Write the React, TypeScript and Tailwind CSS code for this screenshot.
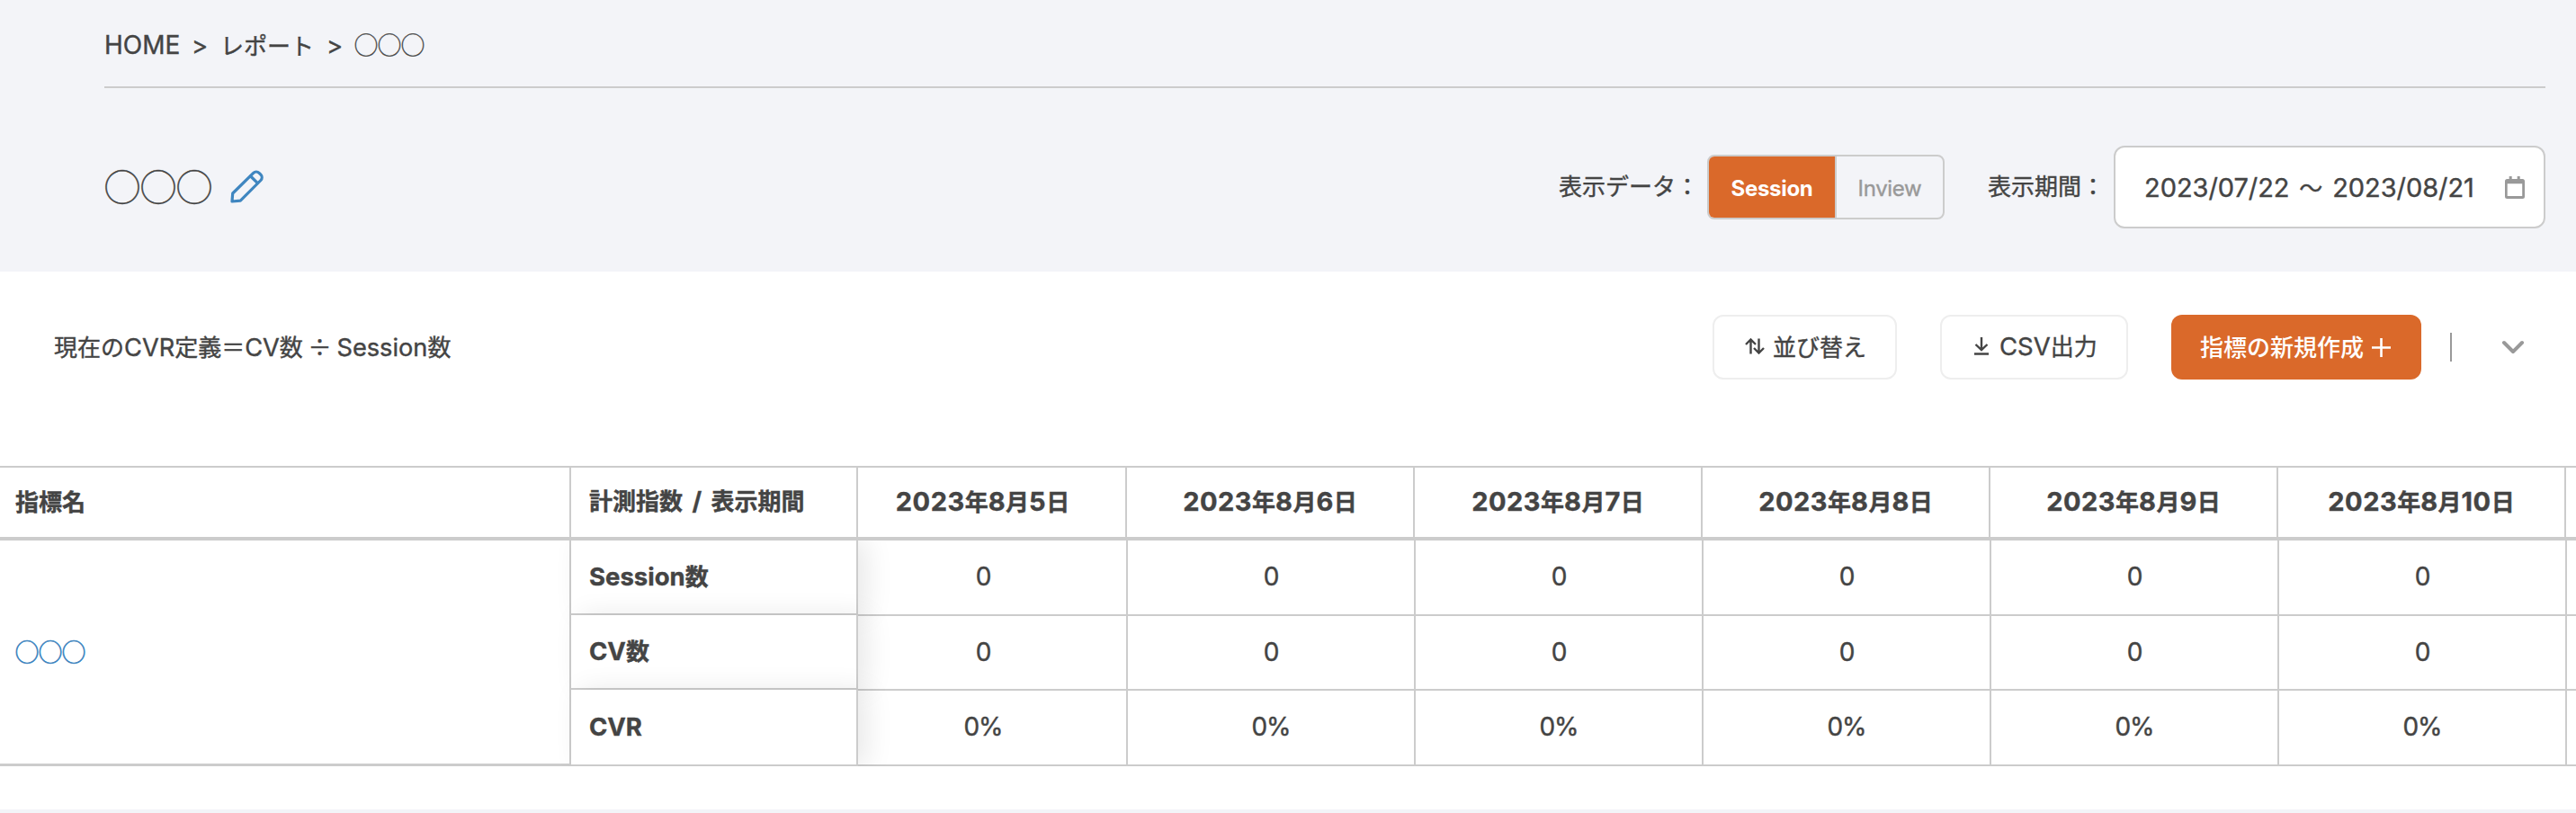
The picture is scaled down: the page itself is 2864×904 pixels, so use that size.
import { Fragment } from 'react'
import type { ReactNode } from 'react'

const DATES = ['2023年8月5日', '2023年8月6日', '2023年8月7日', '2023年8月8日', '2023年8月9日', '2023年8月10日']

const ROWS = [
  { label: 'Session数', value: '0', height: 'h-[84px]', headHeight: 'h-[83px]' },
  { label: 'CV数', value: '0', height: 'h-[83px]', headHeight: 'h-[83px]' },
  { label: 'CVR', value: '0%', height: 'h-[84px]', headHeight: 'h-[85px]' },
]

// 英数字だけ Inter で少し大きめに組む
function Mixed({ text, latin = 'text-[27.5px]' }: { text: string; latin?: string }) {
  const parts = text.split(/([\x21-\x7e]+)/)
  return (
    <span className="whitespace-pre">
      {parts.map((part, i) =>
        i % 2 === 1 ? (
          <span key={i} className={`font-[Inter,sans-serif] leading-none ${latin}`}>
            {part}
          </span>
        ) : (
          <Fragment key={i}>{part}</Fragment>
        )
      )}
    </span>
  )
}

function PencilIcon() {
  return (
    <svg className="h-[37px] w-[37px]" viewBox="0 0 37 37" fill="none" stroke="currentColor" strokeWidth={3.2} strokeLinejoin="round" strokeLinecap="round">
      <path d="M2.700 26L25.700 3.300a4.600 4.600 0 0 1 6.400 0l1.800 1.800a4.600 4.600 0 0 1 0 6.400L11.300 34.200l-9.300.8z" />
      <path d="M22.700 7l7.200 7.200" />
    </svg>
  )
}

function CalendarIcon() {
  return (
    <svg className="h-[25px] w-[22px]" viewBox="0 0 22 25" fill="currentColor">
      <path
        fillRule="evenodd"
        d="M4.700 0h3v3h6V0h3v3H19.500A2.500 2.500 0 0 1 22 5.500v17A2.500 2.500 0 0 1 19.500 25h-17A2.500 2.500 0 0 1 0 22.500v-17A2.500 2.500 0 0 1 2.500 3h2.200zM2.700 8.300V22h16.500V8.300z"
      />
    </svg>
  )
}

function SortIcon() {
  return (
    <svg className="h-[18px] w-[22px]" viewBox="0 0 22 18" fill="none" stroke="currentColor" strokeWidth={2.4}>
      <path d="M6.500 17.500V1.500M1 7l5.500-5.500L12 7" />
      <path d="M15.500 .5v16M10 11l5.500 5.500L21 11" />
    </svg>
  )
}

function DownloadIcon() {
  return (
    <svg className="h-[20px] w-[16px]" viewBox="0 0 16 20" fill="none" stroke="currentColor" strokeWidth={2.4}>
      <path d="M8 0v14M1.500 8L8 14.200 14.500 8M0 18.500h16" />
    </svg>
  )
}

function OutlineButton({ className, children }: { className: string; children: ReactNode }) {
  return (
    <button type="button" className={`flex h-[72px] items-center rounded-xl border-2 border-[#eeeeee] bg-white pb-0.5 ${className}`}>
      {children}
    </button>
  )
}

function Header() {
  return (
    <header className="h-[302px] bg-[#f3f4f8] pr-[34px] pl-[116px]">
      <nav className="flex h-[98px] items-center border-b-2 border-[#cccccc] pt-[3px]">
        <a className="w-[97px] pt-px">
          <Mixed text="HOME" latin="text-[28px]" />
        </a>
        <span className="w-[32px] pt-0.5">
          <Mixed text=">" />
        </span>
        <a className="w-[118px]">レポート</a>
        <span className="w-[31px] pt-0.5">
          <Mixed text=">" />
        </span>
        <span className="pb-0.5">◯◯◯</span>
      </nav>

      <div className="flex h-[220px] items-center">
        <h1 className="pb-[5px] text-[40px] leading-none">◯◯◯</h1>
        <button type="button" className="ml-5 pb-px text-[#3f86c0]" aria-label="編集">
          <PencilIcon />
        </button>

        <div className="ml-auto flex items-center">
          <span className="mr-[9px] pb-1">表示データ：</span>
          <div className="flex h-[72px] w-[264px] overflow-hidden rounded-lg border-2 border-[#cccccc] text-[24px]">
            <button type="button" className="flex w-[142px] items-center justify-center border-r-2 border-[#cccccc] bg-[#da692a] pt-[3px] font-[Inter,sans-serif] font-bold tracking-[-0.3px] text-white [-webkit-text-stroke:0px]">
              Session
            </button>
            <button type="button" className="flex flex-1 items-center justify-center pt-[3px] font-[Inter,sans-serif] tracking-[-0.3px] text-[#999999]">
              Inview
            </button>
          </div>
          <span className="mr-[10px] ml-[48px] pb-1">表示期間：</span>
          <div className="flex h-[92px] w-[480px] items-center justify-between rounded-xl border-2 border-[#cccccc] bg-white pr-[21px] pl-8 [word-spacing:5px]">
            <Mixed text="2023/07/22 〜 2023/08/21" latin="text-[29px] tracking-[-0.05px]" />
            <span className="text-[#999999]">
              <CalendarIcon />
            </span>
          </div>
        </div>
      </div>
    </header>
  )
}

function Toolbar() {
  return (
    <div className="flex h-[216px] items-center pr-[56px] pb-[48px] pl-[60px]">
      <p>
        <Mixed text="現在のCVR定義＝CV数 ÷ Session数" latin="text-[27.2px]" />
      </p>
      <div className="ml-auto flex items-center">
        <OutlineButton className="mr-12 w-[205px] gap-[9px] pl-[34px]">
          <SortIcon />
          並び替え
        </OutlineButton>
        <OutlineButton className="mr-12 w-[209px] gap-3 pl-[36px]">
          <DownloadIcon />
          <Mixed text="CSV出力" latin="text-[27.5px]" />
        </OutlineButton>
        <button type="button" className="flex h-[72px] w-[278px] items-center gap-[9px] rounded-xl bg-[#da692a] pb-0.5 pl-8 font-medium text-white [-webkit-text-stroke:0px]">
          指標の新規作成
          <svg className="mt-0.5 h-[21px] w-[21px]" viewBox="0 0 21 21" fill="none" stroke="currentColor" strokeWidth={2.6}>
            <path d="M10.500 0v21M0 10.500h21" />
          </svg>
        </button>
        <span className="ml-8 h-8 w-0.5 bg-[#999999]" />
        <svg className="ml-[54px] h-7 w-7 text-[#999999]" viewBox="0 0 28 28" fill="none" stroke="currentColor" strokeWidth={4} strokeLinecap="round" strokeLinejoin="round">
          <path d="M4 9l10 10L24 9" />
        </svg>
      </div>
    </div>
  )
}

function ReportTable() {
  return (
    <div className="overflow-hidden">
      <div className="relative z-10 flex h-[83px] w-max items-stretch border-t-2 border-b-4 border-[#cccccc] bg-white font-bold">
        <div className="flex w-[635px] items-center border-r-2 border-[#cccccc] pb-[3px] pl-[17px]">指標名</div>
        <div className="flex w-[319px] items-center border-r-2 border-[#cccccc] pb-0.5 pl-[20px] [word-spacing:4.5px]">
          <Mixed text="計測指数 / 表示期間" />
        </div>
        {DATES.map((date, i) => (
          <div
            key={date}
            className={`flex items-center justify-center border-r-2 border-[#cccccc] pb-0.5 ${i === 0 ? 'w-[299px] pr-5' : 'w-[320px]'}`}
          >
            <Mixed text={date} latin="text-[29px] tracking-[0.5px]" />
          </div>
        ))}
        <div className="w-[320px]" />
      </div>

      <div className="flex w-max overflow-hidden">
        <div className="flex h-[251px] w-[635px] items-center border-r-2 border-b-3 border-[#cccccc] pb-0.5 pl-[17px] text-[#3f86c0] [-webkit-text-stroke:0.7px]">
          ◯◯◯
        </div>

        <div className="relative w-[319px]">
          {ROWS.map((row) => (
            <div
              key={row.label}
              className={`flex items-center border-r-2 border-b-2 border-[#cccccc] bg-white pb-px pl-[20px] font-bold shadow-[10px_0_30px_rgba(0,0,0,0.09)] ${row.headHeight}`}
            >
              <Mixed text={row.label} latin="text-[27.5px]" />
            </div>
          ))}
        </div>

        <div>
          {ROWS.map((row) => (
            <div key={row.label} className={`flex ${row.height}`}>
              {DATES.map((date, i) => (
                <div
                  key={date}
                  className={`flex items-center justify-center border-r-2 border-b-2 border-[#cccccc] pb-0.5 ${i === 0 ? 'w-[300px] pr-5' : 'w-[320px]'}`}
                >
                  <Mixed text={row.value} latin="text-[28px] tracking-[-1px]" />
                </div>
              ))}
              <div className="w-[320px] border-b-2 border-[#cccccc]" />
            </div>
          ))}
        </div>
      </div>
    </div>
  )
}

export default function App() {
  return (
    <div className="h-[904px] w-[2864px] overflow-hidden bg-white font-['Noto_Sans_CJK_JP',sans-serif] text-[26px] leading-none text-[#444444] [-webkit-text-stroke:0.4px]">
      <Header />
      <Toolbar />
      <ReportTable />
      <div className="mt-12 h-1 bg-[#f3f4f8]" />
    </div>
  )
}
